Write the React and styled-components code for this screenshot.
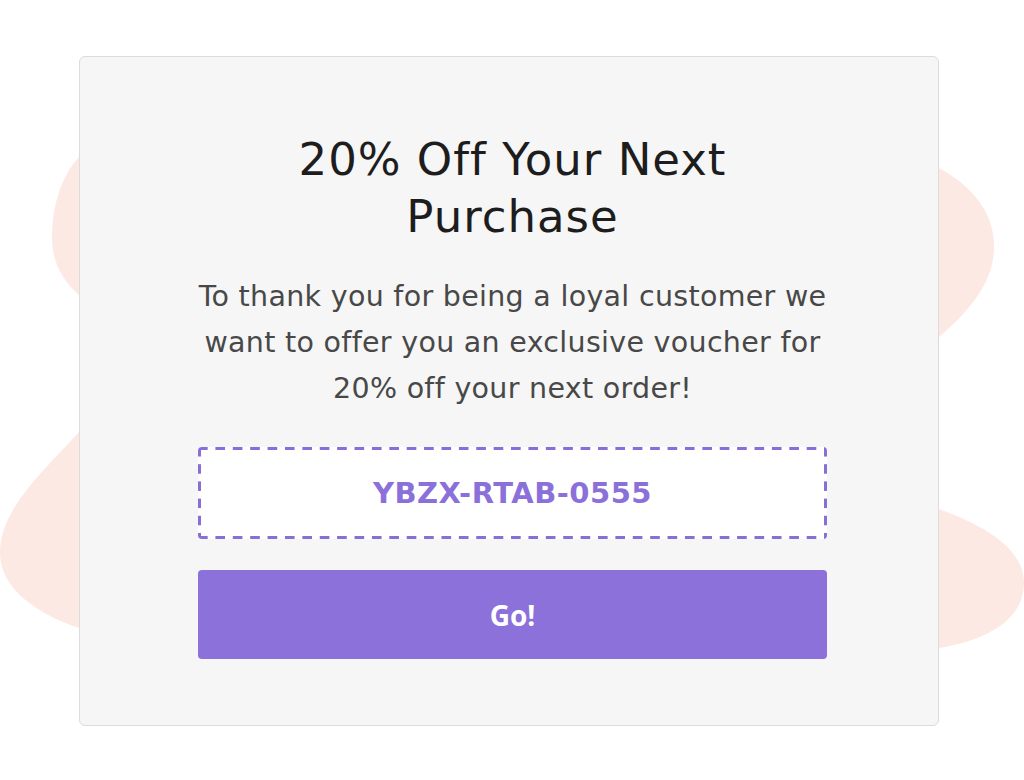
import React from "react";
import styled, { createGlobalStyle } from "styled-components";

const Global = createGlobalStyle`
  html, body { margin: 0; padding: 0; background: #ffffff; }
  body { font-family: "DejaVu Sans", "Open Sans", sans-serif; }
  * { box-sizing: border-box; }
`;

const Page = styled.div`
  position: relative;
  width: 1024px;
  height: 780px;
  overflow: hidden;
  padding: 56px 0 0 79px;
`;

const Blobs = styled.svg`
  position: absolute;
  left: 0;
  top: 0;
  width: 1024px;
  height: 780px;
  z-index: 0;
`;

const Card = styled.div`
  position: relative;
  z-index: 1;
  width: 860px;
  height: 670px;
  background: #f6f6f6;
  border: 1px solid #dcdcdc;
  border-radius: 6px;
  padding: 74px 111px 0 118px;
  display: flex;
  flex-direction: column;
  align-items: stretch;
`;

const Title = styled.h1`
  margin: 0 auto;
  width: 500px;
  font-family: "DejaVu Sans", sans-serif;
  font-weight: 400;
  font-size: 45px;
  line-height: 57px;
  letter-spacing: 1px;
  color: #1d1d1d;
  text-align: center;
`;

const Text = styled.p`
  margin: 29px 0 0;
  font-family: "DejaVu Sans", sans-serif;
  font-size: 28.5px;
  line-height: 46px;
  letter-spacing: 0.3px;
  color: #484848;
  text-align: center;
`;

const dash = "#8a6ed8";

const Code = styled.div`
  margin-top: 35px;
  height: 92px;
  border-radius: 4px;
  background:
    linear-gradient(90deg, ${dash} 10px, transparent 10px) left top / 17.4px 3px repeat-x,
    linear-gradient(90deg, ${dash} 10px, transparent 10px) left bottom / 17.4px 3px repeat-x,
    linear-gradient(180deg, ${dash} 10px, transparent 10px) left top / 3px 17.2px repeat-y,
    linear-gradient(180deg, ${dash} 10px, transparent 10px) right top / 3px 17.2px repeat-y,
    #ffffff;
  display: flex;
  align-items: center;
  justify-content: center;
  font-family: "DejaVu Sans", sans-serif;
  font-weight: 700;
  font-size: 29px;
  letter-spacing: 0.5px;
  color: #8c70da;
`;

const GoButton = styled.button`
  margin-top: 31px;
  height: 89px;
  width: 100%;
  border: none;
  border-radius: 4px;
  background: #8b71d9;
  color: #ffffff;
  font-family: "Open Sans", sans-serif;
  font-weight: 700;
  font-size: 28px;
  cursor: pointer;
  display: flex;
  align-items: center;
  justify-content: center;
`;

export default function App() {
  return (
    <>
      <Global />
      <Page>
        <Blobs viewBox="0 0 1024 780" aria-hidden="true">
          <g fill="#fde9e4">
            <path d="M 79 157 C 62 175, 52 205, 52 237 C 52 262, 62 280, 79 295 L 200 295 L 200 157 Z" />
            <path d="M 939 168 C 972 186, 994 212, 994 247 C 994 282, 970 310, 939 337 L 820 337 L 820 168 Z" />
            <path d="M 939 509 C 992 528, 1024 552, 1024 583 C 1024 618, 990 640, 939 648 L 820 648 L 820 509 Z" />
            <path d="M 79 432 C 45 470, 0 508, 0 553 C 0 590, 40 615, 79 628 L 200 628 L 200 432 Z" />
          </g>
        </Blobs>
        <Card>
          <Title>20% Off Your Next Purchase</Title>
          <Text>
            To thank you for being a loyal customer we want to offer you an
            exclusive voucher for 20% off your next order!
          </Text>
          <Code>YBZX-RTAB-0555</Code>
          <GoButton>Go!</GoButton>
        </Card>
      </Page>
    </>
  );
}
